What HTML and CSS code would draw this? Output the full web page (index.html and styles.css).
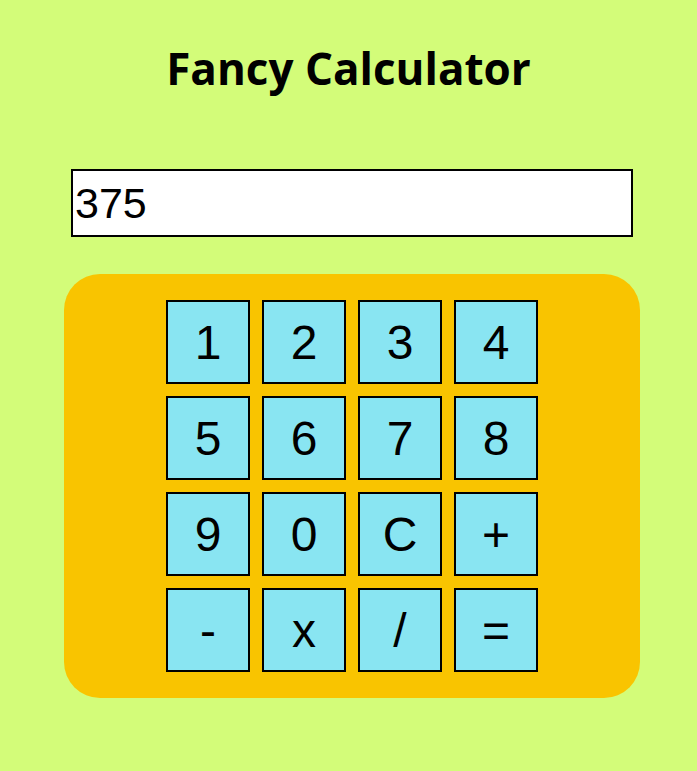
FILE: index.html
```html
<!DOCTYPE html>
<html>
<head>
<meta charset="utf-8">
<link rel="stylesheet" href="styles.css">
</head>
<body>
<h1 class="title">Fancy Calculator</h1>
<div class="display-row"><input class="display" type="text" value="375"></div>
<div class="panel">
  <div class="keys">
    <button class="key">1</button><button class="key">2</button><button class="key">3</button><button class="key">4</button>
    <button class="key">5</button><button class="key">6</button><button class="key">7</button><button class="key">8</button>
    <button class="key">9</button><button class="key">0</button><button class="key">C</button><button class="key">+</button>
    <button class="key">-</button><button class="key">x</button><button class="key">/</button><button class="key">=</button>
  </div>
</div>
</body>
</html>
```
FILE: styles.css
```css
html, body { margin: 0; padding: 0; }
body {
  background: #d3fc79;
  width: 697px;
  height: 771px;
  font-family: "Liberation Sans", Arial, sans-serif;
}
.title {
  margin: 0;
  padding-top: 40px;
  height: 129px;
  box-sizing: border-box;
  text-align: center;
  font-family: "Open Sans", "Noto Sans", sans-serif;
  font-weight: 700;
  font-size: 44px;
  line-height: 56px;
  color: #000;
}
.display-row {
  display: flex;
  padding-left: 71px;
  padding-top: 40px;
}
.display {
  width: 562px;
  height: 68px;
  box-sizing: border-box;
  border: 2px solid #000;
  background: #fff;
  font-family: "Liberation Sans", Arial, sans-serif;
  font-size: 43px;
  padding: 0 2px;
  margin: 0;
  outline: none;
  color: #000;
}
.panel {
  margin-top: 37px;
  margin-left: 64px;
  width: 576px;
  height: 424px;
  box-sizing: border-box;
  background: #f9c400;
  border-radius: 36px;
  padding: 26px 0;
  display: flex;
  justify-content: center;
}
.keys {
  display: grid;
  grid-template-columns: repeat(4, 84px);
  grid-auto-rows: 84px;
  gap: 12px;
}
.key {
  box-sizing: border-box;
  width: 84px;
  height: 84px;
  margin: 0;
  padding: 0;
  border: 2px solid #000;
  background: #89e5f2;
  font-family: "Liberation Sans", Arial, sans-serif;
  font-size: 48px;
  color: #000;
  border-radius: 0;
}
```
